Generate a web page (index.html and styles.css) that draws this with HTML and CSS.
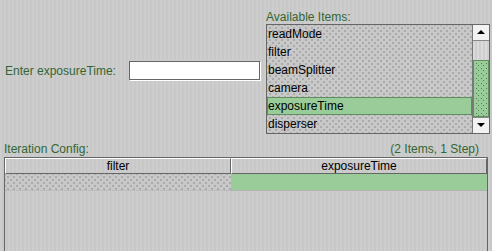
FILE: index.html
```html
<!DOCTYPE html>
<html>
	<head>
		<meta charset="utf-8">
		<title>Iteration Config</title>
		<link rel="stylesheet" href="styles.css">
	</head>
	<body>

		<div class="editor">
			<div class="top">
				<div class="entry">
					<label class="caption" for="value">Enter exposureTime:</label>
					<input id="value" class="field" type="text">
				</div>
				<div class="avail">
					<div class="caption">Available Items:</div>
					<div class="listbox">
						<ul class="items">
							<li>readMode</li>
							<li>filter</li>
							<li>beamSplitter</li>
							<li>camera</li>
							<li class="selected">exposureTime</li>
							<li>disperser</li>
						</ul>
						<div class="vscroll">
							<span class="btn up"></span>
							<span class="track"><span class="thumb"></span></span>
							<span class="btn down"></span>
						</div>
					</div>
				</div>
			</div>

			<div class="config-head">
				<span class="caption">Iteration Config:</span>
				<span class="caption">(2 Items, 1 Step)</span>
			</div>

			<div class="table">
				<div class="thead">
					<div class="th first">filter</div>
					<div class="th">exposureTime</div>
				</div>
				<div class="row">
					<div class="td first"></div>
					<div class="td on"></div>
				</div>
			</div>
		</div>

	</body>
</html>
```

FILE: styles.css
```css
* {
	margin: 0;
	padding: 0;
}

ul {
	list-style: none;
}

body {
	width: 492px;
	height: 251px;
	overflow: hidden;
	font: 12px/14px "Liberation Sans", Arial, sans-serif;
	color: #000;
	background: repeating-linear-gradient(90deg, #cdcdcd 0 2px, #c8c8c8 2px 4px);
}

.caption {
	color: #336633;
}

/* top part: value entry + available items */
.top {
	display: flex;
	height: 142px;
}

.entry {
	display: flex;
	align-items: center;
	justify-content: space-between;
	box-sizing: border-box;
	width: 260px;
	height: 19px;
	margin-top: 61px;
	padding-left: 5px;
}

.field {
	box-sizing: border-box;
	width: 131px;
	height: 19px;
	border: 1px solid #666;
	box-shadow: 1px 1px 0 #fff;
	background-color: #fff;
	outline: none;
}

.avail {
	margin-left: 6px;
	padding-top: 10px;
	width: 224px;
}

.listbox {
	display: flex;
	box-sizing: border-box;
	height: 110px;
	border: 1px solid #666;
	background-color: #c8c8c8;
	background-image: radial-gradient(circle, #aaa 0.7px, transparent 1px),
		radial-gradient(circle, #aaa 0.7px, transparent 1px);
	background-size: 6px 6px;
	background-position: 0 0, 3px 3px;
}

.items {
	flex: 1;
}

.items>li {
	height: 18px;
	line-height: 18px;
	padding-left: 1px;
}

.items>li.selected {
	background-color: #99cc99;
	box-shadow: inset 0 0 0 1px #5f8f5f;
}

.vscroll {
	display: flex;
	flex-direction: column;
	width: 16px;
	border-left: 1px solid #777;
}

.vscroll>.btn {
	position: relative;
	height: 16px;
	box-sizing: border-box;
	background-color: #f2f2f2;
}

.vscroll>.up {
	border-bottom: 1px solid #888;
}

.vscroll>.down {
	border-top: 1px solid #888;
}

.vscroll>.btn::after {
	content: "";
	position: absolute;
	left: 4px;
	top: 5px;
	border-left: 4px solid transparent;
	border-right: 4px solid transparent;
}

.vscroll>.up::after {
	border-bottom: 4px solid #000;
}

.vscroll>.down::after {
	border-top: 4px solid #000;
}

.vscroll>.track {
	flex: 1;
	display: flex;
	flex-direction: column;
	background: repeating-linear-gradient(90deg, #dadada 0 2px, #cfcfcf 2px 4px);
}

.vscroll>.track>.thumb {
	margin-top: auto;
	height: 57px;
	box-sizing: border-box;
	border: 1px solid #5f8f5f;
	background-color: #99cc99;
	background-image: radial-gradient(circle, #4f7f4f 0.8px, transparent 1px),
		radial-gradient(circle, #4f7f4f 0.8px, transparent 1px);
	background-size: 5px 5px;
	background-position: 0 0, 2px 2px;
}

/* iteration table */
.config-head {
	display: flex;
	justify-content: space-between;
	padding: 0 13px 0 4px;
	margin-bottom: 1px;
}

.table {
	box-sizing: border-box;
	width: 484px;
	height: 94px;
	margin-left: 4px;
	border: 1px solid #666;
	border-bottom: none;
}

.thead,
.row {
	display: flex;
}

.th {
	box-sizing: border-box;
	width: 256px;
	height: 16px;
	line-height: 14px;
	text-align: center;
	border-top: 1px solid #fff;
	border-left: 1px solid #fff;
	border-bottom: 1px solid #666;
	border-right: 1px solid #666;
}

.th.first,
.td.first {
	width: 226px;
}

.td {
	width: 256px;
	height: 16px;
	border-bottom: 1px dotted #b0b0b0;
}

.td.first {
	background-color: #c8c8c8;
	background-image: radial-gradient(circle, #aaa 0.7px, transparent 1px),
		radial-gradient(circle, #aaa 0.7px, transparent 1px);
	background-size: 6px 6px;
	background-position: 0 0, 3px 3px;
}

.td.on {
	background-color: #99cc99;
}
```
